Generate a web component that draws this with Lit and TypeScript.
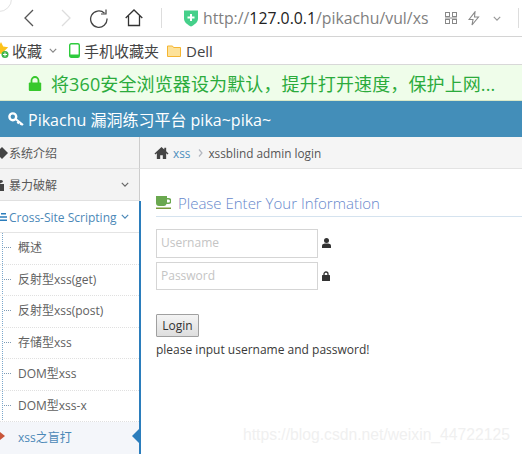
import { LitElement, html, css, svg } from "lit";
import { customElement } from "lit/decorators.js";

const home = svg`<path d="M8 1 0.5 8l1 1L3 7.7V14h3.6v-4h2.800v4H13V7.7L14.500 9l1-1L13 5.700V2h-2v1.800z" fill="currentColor"/>`;
const chevron = svg`<path d="M1 1l4 4 4-4" fill="none" stroke="currentColor" stroke-width="1.500"/>`;

@customElement("app-root")
export class AppRoot extends LitElement {
  static styles = css`
    :host { display: block; width: 522px; height: 454px; overflow: hidden; position: relative; background: #fff;
      font-family: "Open Sans", "Noto Sans CJK SC", sans-serif; color: #393939; }
    svg { display: block; flex: none; }
    .toolbar { height: 36px; border-bottom: 1px solid #d4d4d4; display: flex; align-items: center; position: relative; }
    .corner { position: absolute; left: -14px; top: -14px; width: 24px; height: 24px; border-radius: 50%; border: 1px solid #e2e2e2; }
    .nav { color: #555; margin-left: 24px; }
    .nav.dis { color: #ddd; margin-left: 27px; }
    .reload { margin-left: 18px; color: #444; }
    .homeb { margin-left: 17px; color: #333; }
    .sep { width: 1px; height: 20px; background: #ddd; margin-left: 18px; }
    .shield { margin-left: 21px; }
    .url { margin-left: 4px; width: 221px; white-space: nowrap; font-size: 15.8px; color: #7f7f7f; font-family: "Open Sans", sans-serif; }
    .url b { font-weight: 400; color: #222; }
    .qr { margin-left: 21px; color: #888; }
    .bolt { margin-left: 11px; color: #888; }
    .dn { margin-left: 13px; color: #999; }
    .vsep { width: 1px; height: 20px; background: #ddd; margin-left: 17px; }
    .bookmarks { height: 27px; border-bottom: 1px solid #d8d8d8; display: flex; align-items: center; font-size: 15px; color: #444; }
    .star { margin-left: -6px; }
    .bm1 { margin-left: 2px; }
    .bmdn { margin-left: 7px; color: #888; }
    .phone { margin-left: 12px; color: #2ecb3d; }
    .bm2 { margin-left: 4px; }
    .folder { margin-left: 8px; }
    .bm3 { margin-left: 5px; }
    .notice { height: 35px; padding-top: 1px; box-sizing: border-box; background: #effdea; display: flex; align-items: center; font-size: 18px; letter-spacing: 0.12px; color: #2bab3c; white-space: nowrap; }
    .lock360 { margin-left: 28px; margin-right: 9px; color: #37c82c; }
    .header { height: 36px; background: #438eb9; border-top: 1px solid #d9e8c8; box-sizing: content-box; display: flex; align-items: center; color: #fff; font-size: 16px; padding-left: 8px; gap: 4px; }
    .main { display: flex; height: 317px; }
    .side { width: 139px; flex: none; font-size: 12px; }
    .top { height: 32px; padding-top: 1px; box-sizing: border-box; border-bottom: 1px solid #e0e0e0; background: #f3f3f3; border-right: 1px solid #ccc; margin-right: -1px; display: flex; align-items: center; color: #585858; white-space: nowrap; position: relative; }
    .top .t { margin-left: 1px; }
    .top .chev { position: absolute; right: 10px; top: 13px; color: #666; }
    .top.open { background: #fff; color: #4b88b7; border-right: none; margin-right: 0; border-bottom-color: #e4e4e4; }
    .top.open .chev { color: #4b88b7; right: 10px; }
    .icon-l { margin-left: -1px; color: #444; }
    .top.open .icon-l { color: #2b7dbc; }
    .sub { position: relative; }
    .sub::before { content: ""; position: absolute; left: 2px; top: 0; bottom: 0; border-left: 1px dotted #7ba8cc; }
    .item { height: 31.5px; padding-bottom: 2px; box-sizing: border-box; border-bottom: 1px dotted #e0e0e0; padding-left: 18px; display: flex; align-items: center; color: #616161; position: relative; white-space: nowrap; }
    .item::before { content: ""; position: absolute; left: 4px; top: 14px; width: 7px; border-top: 1px dotted #7e9bb5; }
    .item.on { height: 32px; background: #f4f6fa; color: #4b88b7; border-bottom: none; }
    .item.on::before { display: none; }
    .item.on::after { content: ""; position: absolute; right: 0; top: 7px; border: 7px solid transparent; border-right-color: #2b7dbc; border-left: none; }
    .red { position: absolute; left: 0; top: 10px; width: 0; height: 0; border: 4px solid transparent; border-left: 5px solid #c8553a; border-right: none; }
    .content { flex: 1; display: flex; flex-direction: column; min-width: 0; }
    .crumbs { height: 32px; box-sizing: border-box; background: #f5f5f5; border-bottom: 1px solid #e3e3e3; margin-left: -1px; display: flex; align-items: center; font-size: 11.8px; color: #555; padding: 1px 0 0 14px; }
    .crumbs .hm { color: #444; margin-right: 4px; }
    .crumbs a { color: #4c8fbd; }
    .gt { color: #b2b6bf; margin: 0 5px 0 8px; }
    .page { padding: 22px 0 0 15px; flex: 1; }
    .h { display: flex; align-items: center; gap: 7px; font-size: 15px; font-weight: 300; color: #6688cc; height: 23px; margin-bottom: 2px; }
    .rule { height: 1px; background: #d5e3ef; margin-bottom: 12px; }
    .field { display: flex; align-items: center; margin-bottom: 4px; }
    .input { width: 162px; height: 28.5px; box-sizing: border-box; border: 1px solid #d5d5d5; padding-left: 4px; font-size: 12px; color: #c4c4c4; line-height: 26px; }
    .field svg { margin-left: 4px; color: #333; }
    .btn { display: block; width: 43px; height: 23px; margin-top: 24px; box-sizing: border-box; border: 1px solid #a0a0a0; border-radius: 1px; background: linear-gradient(#f4f4f4, #dedede); font: 12px "Open Sans", sans-serif; color: #333; padding: 0; }
    .msg { font-size: 12px; color: #393939; margin-top: 5px; line-height: 16px; white-space: nowrap; }
    .blue { width: 2px; flex: none; background: #2b7dbc; margin-top: 64px; }
    .mark { position: absolute; left: 243px; top: 426px; font: 15.7px "Liberation Sans", sans-serif; color: #f0f0f0; white-space: nowrap; }
  `;

  render() {
    const items = ["概述", "反射型xss(get)", "反射型xss(post)", "存储型xss", "DOM型xss", "DOM型xss-x"];
    return html`
      <div class="toolbar">
        <div class="corner"></div>
        <svg class="nav" width="10" height="18" viewBox="0 0 10 18"><path d="M9 1 1 9l8 8" fill="none" stroke="currentColor" stroke-width="1.300"/></svg>
        <svg class="nav dis" width="10" height="18" viewBox="0 0 10 18"><path d="M1 1l8 8-8 8" fill="none" stroke="currentColor" stroke-width="1.300"/></svg>
        <svg class="reload" width="19" height="19" viewBox="0 0 19 19"><path d="M15.500 4.200A8.200 8.200 0 1 0 18 9.500" fill="none" stroke="currentColor" stroke-width="1.300"/><path d="M12 5h5V.5" fill="none" stroke="currentColor" stroke-width="1.200"/></svg>
        <svg class="homeb" width="18" height="18" viewBox="0 0 18 18"><path d="M.7 9 9 1l8.300 8M3.500 7v9.500h11V7" fill="none" stroke="currentColor" stroke-width="1.300"/></svg>
        <div class="sep"></div>
        <svg class="shield" width="16" height="18" viewBox="0 0 16 18"><path d="M1 1.500h14v8c0 4-4 6.500-7 8-3-1.500-7-4-7-8z" fill="#45d08a"/><path d="M8 5v7M4.500 8.500h7" stroke="#fff" stroke-width="2"/></svg>
        <div class="url">http://<b>127.0.0.1</b>/pikachu/vul/xs</div>
        <svg class="qr" width="12" height="12" viewBox="0 0 12 12" fill="none" stroke="currentColor"><rect x=".5" y=".5" width="4" height="4"/><rect x="7.500" y=".5" width="4" height="4"/><rect x=".5" y="7.500" width="4" height="4"/><rect x="7.500" y="7.500" width="4" height="4"/><path d="M0 6h12" /></svg>
        <svg class="bolt" width="12" height="15" viewBox="0 0 12 15"><path d="M7 .8 1 8.500h4L4 14l6.500-8H6.500z" fill="none" stroke="currentColor" stroke-width="1.100"/></svg>
        <svg class="dn" width="8" height="5" viewBox="0 0 10 6"><g>${chevron}</g></svg>
        <div class="vsep"></div>
      </div>
      <div class="bookmarks">
        <svg class="star" width="16" height="17" viewBox="0 0 16 17"><path d="M7 0l2.200 4.500 5 .7-3.600 3.500.9 5L7 11.400 2.500 13.700l.9-5L-.2 5.200l5-.7z" fill="#fcc21b"/><circle cx="11" cy="12.500" r="3.500" fill="#3cb54a"/><path d="M11 10.500v4M9 12.500h4" stroke="#fff"/></svg>
        <span class="bm1">收藏</span>
        <svg class="bmdn" width="8" height="5" viewBox="0 0 10 6"><g>${chevron}</g></svg>
        <svg class="phone" width="11" height="15" viewBox="0 0 11 15"><rect x=".7" y=".7" width="9.600" height="13.600" rx="1.500" fill="none" stroke="currentColor" stroke-width="1.400"/><path d="M1 11.500h9V14H1z" fill="currentColor"/></svg>
        <span class="bm2">手机收藏夹</span>
        <svg class="folder" width="14" height="12" viewBox="0 0 14 12"><path d="M.5 1h5l1 1.500h7V11.500H.5z" fill="#fde29a" stroke="#f5b532"/></svg>
        <span class="bm3">Dell</span>
      </div>
      <div class="notice">
        <svg class="lock360" width="14" height="15" viewBox="0 0 14 15"><path d="M3.500 7V4.500a3.500 3.500 0 0 1 7 0V7" fill="none" stroke="currentColor" stroke-width="1.800"/><rect x=".8" y="6.500" width="12.400" height="8.500" rx="1" fill="currentColor"/></svg>
        将360安全浏览器设为默认，提升打开速度，保护上网...
      </div>
      <div class="header">
        <svg width="16" height="14" viewBox="0 0 16 14"><circle cx="4.800" cy="4.800" r="3.400" fill="none" stroke="#fff" stroke-width="2.400"/><path d="M7 6.500l8 6.500M11 9.500l-1.500 2M13.500 11.500l-1 1.500" stroke="#fff" stroke-width="2.200"/></svg>
        <span>Pikachu 漏洞练习平台 pika~pika~</span>
      </div>
      <div class="main">
        <div class="side">
          <div class="top">
            <svg class="icon-l" width="9" height="12" viewBox="0 0 9 12"><path d="M3 0l6 6-6 6-4-4V4z" fill="currentColor"/></svg>
            <span class="t">系统介绍</span>
          </div>
          <div class="top">
            <svg class="icon-l" width="9" height="12" viewBox="0 0 9 12"><path d="M-1 5h6v7h-6zM0 5V3a2 2 0 0 1 4 0" fill="currentColor"/></svg>
            <span class="t">暴力破解</span>
            <svg class="chev" width="8" height="5" viewBox="0 0 10 6"><g>${chevron}</g></svg>
          </div>
          <div class="top open">
            <svg class="icon-l" width="9" height="10" viewBox="0 0 9 10"><path d="M2 1h5v1.500H2zM0 4.300h8v1.500H0zM0 7.600h8v1.500H0z" fill="currentColor"/></svg>
            <span class="t">Cross-Site Scripting</span>
            <svg class="chev" width="8" height="5" viewBox="0 0 10 6"><g>${chevron}</g></svg>
          </div>
          <div class="sub">
            ${items.map((t) => html`<div class="item">${t}</div>`)}
            <div class="item on"><span class="red"></span>xss之盲打</div>
          </div>
        </div>
        <div class="blue"></div>
        <div class="content">
          <div class="crumbs">
            <svg class="hm" width="15" height="14" viewBox="0 0 16 15">${home}</svg>
            <a>xss</a>
            <svg class="gt" width="5" height="8" viewBox="0 0 5 8"><path d="M1 .5 4 4 1 7.500" fill="none" stroke="currentColor" stroke-width="1.200"/></svg>
            <span>xssblind admin login</span>
          </div>
          <div class="page">
            <div class="h">
              <svg width="15" height="14" viewBox="0 0 15 14"><path d="M0 0h11v2h1.500a2.200 2.200 0 0 1 0 6H10.500a3 3 0 0 1-2.500 2H3a3 3 0 0 1-3-3z" fill="#6aa84f"/><path d="M11 3.500v3h1.500a1.500 1.500 0 0 0 0-3z" fill="#fff"/><path d="M0 11.500h15V13H0z" fill="#7a9a3a"/></svg>
              <span>Please Enter Your Information</span>
            </div>
            <div class="rule"></div>
            <div class="field">
              <div class="input">Username</div>
              <svg width="9" height="10" viewBox="0 0 9 10"><circle cx="4.500" cy="2.500" r="2.500" fill="currentColor"/><path d="M0 10V7.500C0 6 2 5.500 4.500 5.500S9 6 9 7.500V10z" fill="currentColor"/></svg>
            </div>
            <div class="field">
              <div class="input">Password</div>
              <svg width="8" height="10" viewBox="0 0 8 10"><path d="M2 4.500V3a2 2 0 0 1 4 0v1.500" fill="none" stroke="currentColor" stroke-width="1.300"/><rect y="4" width="8" height="6" rx=".5" fill="currentColor"/></svg>
            </div>
            <button class="btn">Login</button>
            <div class="msg">please input username and password!</div>
          </div>
        </div>
      </div>
      <div class="mark">https://blog.csdn.net/weixin_44722125</div>
    `;
  }
}
